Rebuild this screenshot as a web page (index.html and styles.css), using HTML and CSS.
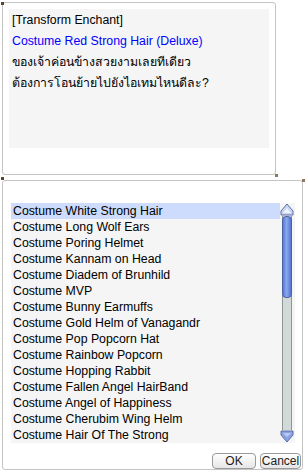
FILE: index.html
```html
<html><head>
    <link rel="stylesheet" href="styles.css">
</head><body>
    <div class="panel top">
        <div class="msg">
            <div class="line">[Transform Enchant]</div>
            <div class="line item">Costume Red Strong Hair (Deluxe)</div>
            <div class="line">ของเจ้าค่อนข้างสวยงามเลยทีเดียว</div>
            <div class="line">ต้องการโอนย้ายไปยังไอเทมไหนดีละ?</div>
        </div>
    </div>
    <div class="panel bottom">
        <div class="listbox">
            <ul class="items">
                <li class="sel">Costume White Strong Hair</li>
                <li>Costume Long Wolf Ears</li>
                <li>Costume Poring Helmet</li>
                <li>Costume Kannam on Head</li>
                <li>Costume Diadem of Brunhild</li>
                <li>Costume MVP</li>
                <li>Costume Bunny Earmuffs</li>
                <li>Costume Gold Helm of Vanagandr</li>
                <li>Costume Pop Popcorn Hat</li>
                <li>Costume Rainbow Popcorn</li>
                <li>Costume Hopping Rabbit</li>
                <li>Costume Fallen Angel HairBand</li>
                <li>Costume Angel of Happiness</li>
                <li>Costume Cherubim Wing Helm</li>
                <li>Costume Hair Of The Strong</li>
            </ul>
            <div class="scroll">
                <svg class="arrow" width="14" height="13" viewBox="0 0 14 13">
                    <path d="M7 1 L13 8 L13 12 L1 12 L1 8 Z" fill="#c9d6f2" stroke="#5a6fa8" stroke-width="1"/>
                    <path d="M3 10 L7 5 L11 10 Z" fill="#eef2fb"/>
                </svg>
                <div class="track">
                    <div class="thumb"></div>
                </div>
                <svg class="arrow" width="14" height="13" viewBox="0 0 14 13">
                    <path d="M1 1 L13 1 L13 5 L7 12 L1 5 Z" fill="#8aa2e2" stroke="#5a6fa8" stroke-width="1"/>
                    <path d="M3 3 L11 3 L7 7 Z" fill="#b9c9f0"/>
                </svg>
            </div>
        </div>
        <div class="buttons">
            <button class="btn ok">OK</button>
            <button class="btn">Cancel</button>
        </div>
    </div>
</body></html>
```

FILE: styles.css
```css
body {
    margin: 0;
    background: #ffffff;
    font-family: 'Liberation Sans', 'DejaVu Sans', sans-serif;
    font-size: 12.3px;
    color: #000000;
}

.panel {
    position: relative;
    box-sizing: border-box;
    border: 1px solid #c4c4c4;
    border-radius: 3px;
    background: #ffffff;
}

.panel::before,
.panel::after {
    content: "";
    position: absolute;
    width: 3px;
    height: 3px;
    background: #5a4630;
}

.top::before {
    left: -2px;
    top: -1px;
}

.top::after {
    right: -3px;
    bottom: -3px;
    background: #8a7a5a;
}

.bottom::before {
    left: -2px;
    top: -4px;
}

.bottom::after {
    right: -3px;
    top: -2px;
    background: #8a7a5a;
}

.top {
    margin: 2px 0 0 2px;
    width: 274px;
    height: 173px;
    padding: 6px 6px 0 6px;
}

.msg {
    background: #f5f5f5;
    height: 138px;
    padding: 1px 3px 0 3px;
}

.line {
    height: 21px;
    line-height: 21px;
    white-space: nowrap;
}

.item {
    color: #0000ff;
}

.bottom {
    margin: 5px 0 0 2px;
    width: 301px;
    height: 290px;
    padding: 22px 6px 0 8px;
}

.listbox {
    display: flex;
    background: #f5f5f5;
    width: 284px;
    height: 240px;
}

.items {
    list-style: none;
    margin: 0;
    padding: 0;
    flex: 1;
}

.items li {
    height: 16px;
    line-height: 16px;
    padding-left: 2px;
    white-space: nowrap;
}

.items li.sel {
    background: #cddcfc;
}

.scroll {
    display: flex;
    flex-direction: column;
    align-items: center;
    width: 14px;
    margin-right: 1px;
}

.scroll .arrow {
    display: block;
    flex: none;
}

.track {
    flex: 1;
    width: 10px;
    box-sizing: border-box;
    background: #d2d9d9;
    border: 1px solid #8c9494;
    border-top: none;
    border-bottom: none;
}

.thumb {
    height: 80px;
    margin: 0 -1px;
    border: 1px solid #4d62a6;
    border-radius: 4px;
    background: linear-gradient(to right, #5a7bd6, #8aa8ef 45%, #5674d0);
}

.buttons {
    display: flex;
    justify-content: flex-end;
    gap: 4px;
    margin-top: 10px;
    margin-right: -5px;
}

.btn {
    font-family: 'Liberation Sans', sans-serif;
    font-size: 12px;
    height: 16px;
    padding: 0;
    border: 1px solid #9a9a9a;
    border-radius: 4px;
    background: linear-gradient(#ffffff, #e6e6e6);
    color: #222222;
    line-height: 14px;
}

.ok {
    width: 44px;
}

.btn:last-child {
    width: 41px;
}
```
